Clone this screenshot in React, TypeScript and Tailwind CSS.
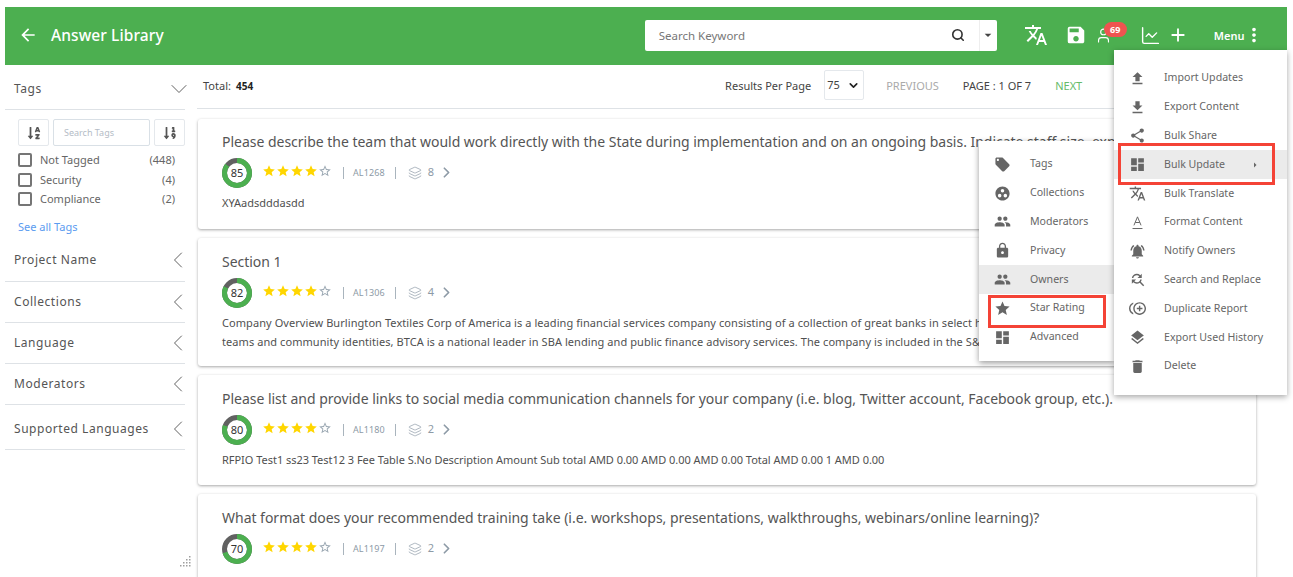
import React from "react";
import { ChevronDown, ChevronLeft, ChevronRight, Layers, LineChart, Search, User } from "lucide-react";
import { FaSortAlphaDown, FaSortNumericDown } from "react-icons/fa";
import {
  MdAdd,
  MdArrowBack,
  MdArrowDropDown,
  MdControlPointDuplicate,
  MdDashboard,
  MdDelete,
  MdFileDownload,
  MdFileUpload,
  MdFindReplace,
  MdGroupWork,
  MdLayers,
  MdLocalOffer,
  MdLock,
  MdMoreVert,
  MdNotificationsActive,
  MdPeople,
  MdSave,
  MdShare,
  MdStar,
  MdStarBorder,
  MdTranslate,
} from "react-icons/md";

// thin underlined A, the md icon is too heavy for this one
function FormatIcon({ size, className }: { size: number; className?: string }) {
  return (
    <svg width={size} height={size} viewBox="0 0 24 24" fill="none" stroke="currentColor" strokeWidth="1.4" className={className}>
      <path d="M7 16 L12 4 L17 16 M8.8 12 H15.2" />
      <path d="M5 20.5 H19" />
    </svg>
  );
}

const mainMenu = [
  { label: "Import Updates", icon: MdFileUpload },
  { label: "Export Content", icon: MdFileDownload },
  { label: "Bulk Share", icon: MdShare },
  { label: "Bulk Update", icon: MdDashboard, active: true },
  { label: "Bulk Translate", icon: MdTranslate },
  { label: "Format Content", icon: FormatIcon },
  { label: "Notify Owners", icon: MdNotificationsActive },
  { label: "Search and Replace", icon: MdFindReplace },
  { label: "Duplicate Report", icon: MdControlPointDuplicate },
  { label: "Export Used History", icon: MdLayers },
  { label: "Delete", icon: MdDelete },
];

const subMenu = [
  { label: "Tags", icon: MdLocalOffer },
  { label: "Collections", icon: MdGroupWork },
  { label: "Moderators", icon: MdPeople },
  { label: "Privacy", icon: MdLock },
  { label: "Owners", icon: MdPeople, active: true },
  { label: "Star Rating", icon: MdStar },
  { label: "Advanced", icon: MdDashboard },
];

const tags = [
  { name: "Not Tagged", count: "(448)" },
  { name: "Security", count: "(4)" },
  { name: "Compliance", count: "(2)" },
];

const cards = [
  {
    title: "Please describe the team that would work directly with the State during implementation and on an ongoing basis. Indicate staff size, expe",
    score: 85,
    code: "AL1268",
    count: 8,
    lines: ["XYAadsdddasdd"],
    box: "h-[110px] pt-[13px]",
    body: "tracking-[0px]",
  },
  {
    title: "Section 1",
    score: 82,
    code: "AL1306",
    count: 4,
    lines: [
      "Company Overview Burlington Textiles Corp of America is a leading financial services company consisting of a collection of great banks in select h",
      "teams and community identities, BTCA is a national leader in SBA lending and public finance advisory services. The company is included in the S&",
    ],
    box: "h-[128px] pt-[14px]",
    body: "tracking-[0.07px]",
  },
  {
    title: "Please list and provide links to social media communication channels for your company (i.e. blog, Twitter account, Facebook group, etc.).",
    score: 80,
    code: "AL1180",
    count: 2,
    lines: ["RFPIO Test1 ss23 Test12 3 Fee Table S.No Description Amount Sub total AMD 0.00 AMD 0.00 AMD 0.00 Total AMD 0.00 1 AMD 0.00"],
    box: "h-[110px] pt-[14px]",
    body: "tracking-[-0.03px]",
  },
  {
    title: "What format does your recommended training take (i.e. workshops, presentations, walkthroughs, webinars/online learning)?",
    score: 70,
    code: "AL1197",
    count: 2,
    lines: [],
    box: "h-[110px] pt-[14px]",
    body: "tracking-[0px]",
  },
];

function Donut({ value }: { value: number }) {
  const r = 12.5;
  const c = 2 * Math.PI * r;
  return (
    <div className="relative w-[30px] h-[30px] shrink-0">
      <svg width="30" height="30" viewBox="0 0 30 30" className="-rotate-90">
        <circle cx="15" cy="15" r={r} fill="none" stroke="#616161" strokeWidth="5" />
        <circle
          cx="15"
          cy="15"
          r={r}
          fill="none"
          stroke="#4caf50"
          strokeWidth="5"
          strokeDasharray={`${(c * value) / 100} ${c}`}
        />
      </svg>
      <span className="absolute inset-0 flex items-center justify-center text-[11px] text-[#333]">{value}</span>
    </div>
  );
}

function Card({ card }: { card: (typeof cards)[number] }) {
  return (
    <div className={`${card.box} shrink-0 bg-white rounded-[3px] pl-[24px] overflow-hidden shadow-[0_1px_3px_rgba(0,0,0,0.35)]`}>
      <div className="text-[14px] leading-[20px] tracking-[-0.02px] text-[#555] whitespace-nowrap">{card.title}</div>
      <div className="flex items-center h-[30px] mt-[6px]">
        <Donut value={card.score} />
        <div className="flex items-center ml-[10px] -mt-[4px] text-[#ffd600]">
          <MdStar size={14} />
          <MdStar size={14} />
          <MdStar size={14} />
          <MdStar size={14} />
          <MdStarBorder size={14} className="text-[#9aa7b2]" />
        </div>
        <div className="flex items-center -mt-[1px] text-[#8d9aa6]">
          <span className="w-px h-[12px] bg-[#a9b4bd] ml-[11px]" />
          <span className="text-[9px] ml-[9px] tracking-[0.1px]">{card.code}</span>
          <span className="w-px h-[12px] bg-[#a9b4bd] ml-[10px]" />
          <Layers size={14} strokeWidth={1.2} className="ml-[12px]" />
          <span className="text-[11px] ml-[6px]">{card.count}</span>
          <ChevronRight size={17} strokeWidth={2.4} className="ml-[4px]" />
        </div>
      </div>
      <div className={`mt-[5px] text-[11px] leading-[19px] text-[#505050] whitespace-nowrap ${card.body}`}>
        {card.lines.map((line) => (
          <div key={line}>{line}</div>
        ))}
      </div>
    </div>
  );
}

function Filter({ label, height }: { label: string; height: string }) {
  return (
    <div className={`${height} flex items-center justify-between border-b border-[#dee2e6] pl-[9px] pr-[1px]`}>
      <span className="text-[12px] tracking-[0.55px] text-[#555]">{label}</span>
      <ChevronLeft size={28} strokeWidth={0.8} className="text-[#555] -mr-[8px] -my-[6px]" />
    </div>
  );
}

export default function App() {
  return (
    <div
      className="relative h-[577px] overflow-hidden bg-white pt-[7px] px-[5px]"
      style={{ fontFamily: '"Noto Sans", "Liberation Sans", sans-serif' }}
    >
      <header className="h-[58px] w-[1282px] bg-[#4caf50] flex items-center pb-[2px] text-white">
        <MdArrowBack size={20} className="ml-[13px]" />
        <span className="ml-[13px] mt-[2px] text-[15.5px] font-medium tracking-[0.1px]">Answer Library</span>
        <div className="ml-[481px] flex h-[31px] w-[352px] bg-white rounded-[2px] text-[#666]">
          <div className="w-[292px] pl-[14px] text-[11.5px] leading-[31px] text-[#777]">Search Keyword</div>
          <div className="w-[42px] flex items-center justify-center text-[#333]">
            <Search size={14} strokeWidth={2.8} />
          </div>
          <div className="w-[18px] flex items-center justify-center border-l border-[#eee] text-[#444]">
            <MdArrowDropDown size={16} />
          </div>
        </div>
        <MdTranslate size={24} className="ml-[27px]" />
        <MdSave size={22} className="ml-[17px]" />
        <div className="relative ml-[8px]">
          <User size={17} strokeWidth={1.6} />
          <span className="absolute -top-[5px] left-[9px] w-[23px] h-[15px] rounded-full bg-[#ef5350] text-[9px] font-bold leading-[15px] text-center">69</span>
        </div>
        <LineChart size={21} strokeWidth={1.6} className="ml-[28px]" />
        <MdAdd size={22} className="ml-[6px]" />
        <span className="ml-[25px] mt-[2px] text-[11px] font-semibold">Menu</span>
        <MdMoreVert size={22} className="ml-[-1px]" />
      </header>

      <div className="flex">
        <aside className="w-[180px] shrink-0">
          <div className="h-[45px] flex items-center justify-between border-b border-[#dee2e6] pl-[9px] pt-[3px]">
            <span className="text-[12px] tracking-[0.55px] text-[#555]">Tags</span>
            <ChevronDown size={28} strokeWidth={0.8} className="text-[#555] -mr-[8px] -my-[6px]" />
          </div>
          <div className="pl-[13px] pt-[9px]">
            <div className="flex gap-[4px]">
              <div className="w-[31px] h-[27px] border border-[#e4e8ec] rounded-[2px] flex items-center justify-center text-[#555]">
                <FaSortAlphaDown size={14} />
              </div>
              <div className="w-[97px] h-[27px] border border-[#d9e0e6] rounded-[2px] pl-[10px] text-[9px] leading-[25px] text-[#b4bcc6]">Search Tags</div>
              <div className="w-[31px] h-[27px] border border-[#e4e8ec] rounded-[2px] flex items-center justify-center text-[#555]">
                <FaSortNumericDown size={14} />
              </div>
            </div>
            <div className="mt-[4.5px]">
              {tags.map((t) => (
                <div key={t.name} className="h-[19.5px] flex items-center text-[11px] text-[#666]">
                  <span className="w-[14px] h-[14px] border-2 border-[#757575] rounded-[2px]" />
                  <span className="ml-[8px]">{t.name}</span>
                  <span className="ml-auto mr-[10px]">{t.count}</span>
                </div>
              ))}
            </div>
            <div className="mt-[9.5px] text-[11px] text-[#5b9bf0]">See all Tags</div>
          </div>
          <Filter label="Project Name" height="h-[47px] pt-[4px]" />
          <Filter label="Collections" height="h-[41px]" />
          <Filter label="Language" height="h-[41px]" />
          <Filter label="Moderators" height="h-[41px]" />
          <Filter label="Supported Languages" height="h-[45px] pt-[4px]" />
        </aside>

        <main className="ml-[12px] w-[1060px]">
          <div className="h-[44px] flex items-center border-b border-[#dee2e6] text-[11px] text-[#444]">
            <span className="ml-[6px]">Total:</span>
            <span className="ml-[5px] font-bold text-[10px] text-[#222]">454</span>
            <span className="ml-[472px]">Results Per Page</span>
            <div className="ml-[13px] w-[40px] h-[30px] border border-[#e4e8ec] rounded-[2px] flex items-center justify-between pl-[2px] pr-[3px] -mt-[3px]">
              <span>75</span>
              <ChevronDown size={13} strokeWidth={3} className="text-[#222]" />
            </div>
            <span className="ml-[22px] text-[#aaa]">PREVIOUS</span>
            <span className="ml-[24px]">PAGE : 1 OF 7</span>
            <span className="ml-[24px] text-[#66bb6a]">NEXT</span>
          </div>
          <div className="flex flex-col gap-[9px] pt-[10px] px-[1px]">
            {cards.map((card) => (
              <Card key={card.code} card={card} />
            ))}
          </div>
        </main>
      </div>

      {/* resize grip */}
      <svg className="absolute left-[180px] top-[556px]" width="11" height="11" viewBox="0 0 11 11" fill="#9e9e9e">
        <rect x="9" y="0" width="1.5" height="1.5" />
        <rect x="6" y="3" width="1.5" height="1.5" />
        <rect x="9" y="3" width="1.5" height="1.5" />
        <rect x="3" y="6" width="1.5" height="1.5" />
        <rect x="6" y="6" width="1.5" height="1.5" />
        <rect x="9" y="6" width="1.5" height="1.5" />
        <rect x="0" y="9" width="1.5" height="1.5" />
        <rect x="3" y="9" width="1.5" height="1.5" />
        <rect x="6" y="9" width="1.5" height="1.5" />
        <rect x="9" y="9" width="1.5" height="1.5" />
      </svg>

      {/* bulk update submenu */}
      <div className="absolute left-[979px] top-[141px] w-[135px] h-[220px] bg-white shadow-[0_2px_6px_rgba(0,0,0,0.4)] pt-[9px]">
        {subMenu.map((item) => (
          <div key={item.label} className={`h-[28.8px] flex items-center pl-[15px] text-[10.6px] text-[#666] ${item.active ? "bg-[#ebebeb]" : ""}`}>
            <item.icon size={17} className="text-[#666] shrink-0" />
            <span className="ml-[19px]">{item.label}</span>
          </div>
        ))}
      </div>

      {/* main menu */}
      <div className="absolute left-[1114px] top-[50px] w-[173px] h-[345px] bg-white shadow-[0_2px_6px_rgba(0,0,0,0.35)] pt-[14px]">
        {mainMenu.map((item) => (
          <div key={item.label} className={`h-[28.8px] flex items-center pl-[15px] text-[10.6px] text-[#666] ${item.active ? "bg-[#ebebeb]" : ""}`}>
            <item.icon size={17} className="text-[#666] shrink-0" />
            <span className="ml-[18px]">{item.label}</span>
            {item.active && <MdArrowDropDown size={12} className="ml-[24px] -rotate-90 text-[#666]" />}
          </div>
        ))}
      </div>

      {/* red highlight boxes */}
      <div className="absolute left-[1118px] top-[143px] w-[157px] h-[42px] border-[3px] border-[#f44336]" />
      <div className="absolute left-[988px] top-[295px] w-[118px] h-[33px] border-[3px] border-[#f44336]" />
    </div>
  );
}
